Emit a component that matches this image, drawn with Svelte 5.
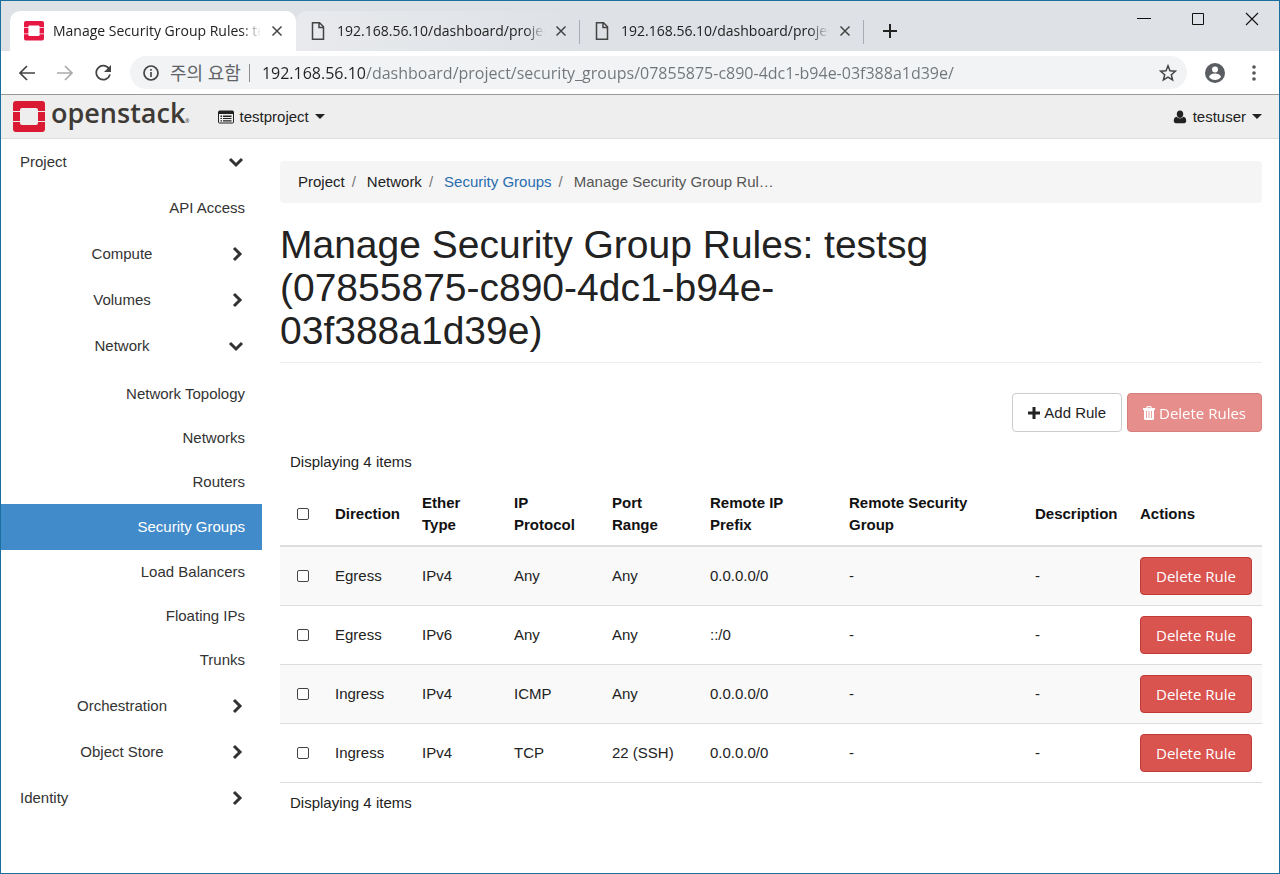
<script lang="ts">
    type Rule = {
        direction: string;
        ether: string;
        protocol: string;
        port: string;
        prefix: string;
    };

    const tabs = [
        { title: "Manage Security Group Rules: testsg", active: true },
        { title: "192.168.56.10/dashboard/project/", active: false },
        { title: "192.168.56.10/dashboard/project/", active: false },
    ];

    const networkItems = [
        "Network Topology",
        "Networks",
        "Routers",
        "Security Groups",
        "Load Balancers",
        "Floating IPs",
        "Trunks",
    ];

    const columns = [
        { label: "Direction", width: 87 },
        { label: "Ether Type", width: 92 },
        { label: "IP Protocol", width: 98 },
        { label: "Port Range", width: 98 },
        { label: "Remote IP Prefix", width: 139 },
        { label: "Remote Security Group", width: 186 },
        { label: "Description", width: 105 },
        { label: "Actions", width: 131 },
    ];

    const rules: Rule[] = [
        { direction: "Egress", ether: "IPv4", protocol: "Any", port: "Any", prefix: "0.0.0.0/0" },
        { direction: "Egress", ether: "IPv6", protocol: "Any", port: "Any", prefix: "::/0" },
        { direction: "Ingress", ether: "IPv4", protocol: "ICMP", port: "Any", prefix: "0.0.0.0/0" },
        { direction: "Ingress", ether: "IPv4", protocol: "TCP", port: "22 (SSH)", prefix: "0.0.0.0/0" },
    ];

    let selected = $state(rules.map(() => false));
    const allSelected = $derived(selected.every(Boolean));
    const noneSelected = $derived(!selected.some(Boolean));

    let url = $state("192.168.56.10/dashboard/project/security_groups/07855875-c890-4dc1-b94e-03f388a1d39e/");

    const toggleAll = () => {
        const next = !allSelected;
        selected = rules.map(() => next);
    };
</script>

{#snippet mark(size: number, color: string)}
    <svg width={size} height={size} viewBox="0 0 32 32" aria-hidden="true">
        <path fill={color} d="M3 0h26a3 3 0 0 1 3 3v7h-7V9a2 2 0 0 0-2-2H9a2 2 0 0 0-2 2v1H0V3a3 3 0 0 1 3-3z" />
        <path fill={color} d="M0 11h7v9H0zM25 11h7v9h-7z" />
        <path fill={color} d="M0 21h7v1a2 2 0 0 0 2 2h14a2 2 0 0 0 2-2v-1h7v7a3 3 0 0 1-3 3H3a3 3 0 0 1-3-3z" />
    </svg>
{/snippet}

{#snippet chevron(open: boolean)}
    <svg class="chevron" width="16" height="16" viewBox="0 0 16 16" aria-hidden="true">
        <path d={open ? "M2 5l6 6 6-6" : "M6 2l6 6-6 6"} />
    </svg>
{/snippet}

{#snippet group(label: string, open: boolean)}
    <button class="group" aria-expanded={open}>
        <span>{label}</span>
        {@render chevron(open)}
    </button>
{/snippet}

<div class="window">
    <div class="tab-strip">
        {#each tabs as tab, i}
            <div class="tab" class:active={tab.active} class:hovered={i === 1}>
                {#if tab.active}
                    {@render mark(20, "#e61742")}
                {:else}
                    <svg width="20" height="20" viewBox="0 0 20 20" aria-hidden="true">
                        <path class="thin" d="M4.5 1.8h7l4 4v12.4h-11zM11 2v4.5h4.5" />
                    </svg>
                {/if}
                <span class="tab-title">{tab.title}</span>
                <button class="tab-close" aria-label="Close tab">
                    <svg width="12" height="12" viewBox="0 0 12 12"><path class="thin" d="M1.5 1.5l9 9m0-9l-9 9" /></svg>
                </button>
            </div>
        {/each}
        <button class="new-tab" aria-label="New tab">
            <svg width="16" height="16" viewBox="0 0 16 16"><path d="M8 1v14M1 8h14" stroke="#222" stroke-width="2" /></svg>
        </button>
        <div class="controls">
            <button aria-label="Minimize">
                <svg width="14" height="14" viewBox="0 0 14 14"><path d="M0 6.5h14" stroke="#111" /></svg>
            </button>
            <button aria-label="Maximize">
                <svg width="14" height="14" viewBox="0 0 14 14"><path d="M1.5 1.5h11v11h-11z" fill="none" stroke="#111" /></svg>
            </button>
            <button aria-label="Close">
                <svg width="14" height="14" viewBox="0 0 14 14"><path d="M1 1l12 12M13 1L1 13" stroke="#111" stroke-width="1.1" /></svg>
            </button>
        </div>
    </div>

    <div class="toolbar">
        <button aria-label="Back">
            <svg width="18" height="18" viewBox="0 0 18 18"><path class="stroke" d="M17 9H2m7-7L2 9l7 7" /></svg>
        </button>
        <button class="dim" aria-label="Forward">
            <svg width="18" height="18" viewBox="0 0 18 18"><path class="stroke" d="M1 9h15M9 2l7 7-7 7" /></svg>
        </button>
        <button aria-label="Reload">
            <svg width="18" height="18" viewBox="0 0 18 18">
                <path class="stroke" d="M15.2 5A7 7 0 1 0 16 10.5" />
                <path d="M17 1v7h-7z" fill="#444" />
            </svg>
        </button>
        <div class="omnibox">
            <svg width="18" height="18" viewBox="0 0 18 18" aria-hidden="true">
                <circle class="thick" cx="9" cy="9" r="7" />
                <path d="M8.1 8h1.8v5H8.100zM8.100 5h1.800v1.800H8.100z" fill="#555" />
            </svg>
            <span class="warning">주의 요함</span>
            <span class="divider"></span>
            <input class="url" aria-label="Address" bind:value={url} />
            <button aria-label="Bookmark this page">
                <svg width="18" height="18" viewBox="0 0 18 18">
                    <path class="thin" d="M9 1.8l2 5 5.4.4-4.1 3.5 1.3 5.3L9 13.1 4.400 16l1.300-5.300L1.600 7.200 7 6.800z" />
                </svg>
            </button>
        </div>
        <button class="profile" aria-label="Profile">
            <svg width="20" height="20" viewBox="0 0 20 20">
                <circle cx="10" cy="10" r="10" fill="#5a5d61" />
                <circle cx="10" cy="6.5" r="3" fill="#fff" />
                <path d="M4 14c1-3 4-3.5 6-3.5s5 .5 6 3.5c-1.5 2-3.5 3-6 3s-4.5-1-6-3z" fill="#fff" />
            </svg>
        </button>
        <button aria-label="Menu">
            <svg width="18" height="18" viewBox="0 0 18 18" fill="#555">
                <circle cx="9" cy="3" r="1.8" /><circle cx="9" cy="9" r="1.8" /><circle cx="9" cy="15" r="1.8" />
            </svg>
        </button>
    </div>

    <header class="navbar">
        <a class="brand" href="#home">
            {@render mark(32, "#da1a32")}
            <span class="wordmark">openstack<small>®</small></span>
        </a>
        <button class="menu">
            <svg width="16" height="14" viewBox="0 0 16 14" aria-hidden="true">
                <path fill="none" stroke="#222" d="M1.5 1h13a1 1 0 0 1 1 1v10a1 1 0 0 1-1 1h-13a1 1 0 0 1-1-1V2a1 1 0 0 1 1-1z" />
                <path fill="#222" d="M1 1h14v3H1zM2.5 5.5H4V7H2.5zM5 5.5h8.5V7H5zM2.5 8H4v1H2.5zM5 8h8.5v1H5zM2.5 10.3H4v1.2H2.5zM5 10.3h8.5v1.2H5z" />
            </svg>
            testproject
            <span class="caret"></span>
        </button>
        <button class="menu user">
            <svg width="14" height="14" viewBox="0 0 14 14" fill="#222" aria-hidden="true">
                <path d="M3.8 4.2a3.2 3.7 0 0 1 6.4 0c0 2.3-1.4 3.8-3.2 3.8S3.8 6.5 3.8 4.2z" />
                <path d="M3.6 6.8C5.5 9 8.5 9 10.4 6.8c2 .4 2.8 1.8 2.8 4.2 0 1.4-.9 2.2-2 2.2H2.8c-1.1 0-2-.8-2-2.2 0-2.4.8-3.8 2.8-4.2z" />
            </svg>
            testuser
            <span class="caret"></span>
        </button>
    </header>

    <div class="body">
        <nav class="sidebar">
            <button class="group root" aria-expanded="true">
                <span>Project</span>
                {@render chevron(true)}
            </button>
            <ul class="single">
                <li><a href="#api">API Access</a></li>
            </ul>
            {@render group("Compute", false)}
            {@render group("Volumes", false)}
            {@render group("Network", true)}
            <ul>
                {#each networkItems as item}
                    <li><a href="#network" class:current={item === "Security Groups"}>{item}</a></li>
                {/each}
            </ul>
            {@render group("Orchestration", false)}
            {@render group("Object Store", false)}
            <button class="group root" aria-expanded="false">
                <span>Identity</span>
                {@render chevron(false)}
            </button>
        </nav>

        <main>
            <ol class="breadcrumb">
                <li>Project</li>
                <li>Network</li>
                <li><a href="#groups">Security Groups</a></li>
                <li class="here">Manage Security Group Rul…</li>
            </ol>

            <div class="page-header">
                <h1>Manage Security Group Rules: testsg (07855875-c890-4dc1-b94e-03f388a1d39e)</h1>
            </div>

            <div class="actions">
                <button class="btn">
                    <svg width="12" height="12" viewBox="0 0 12 12" aria-hidden="true"><path d="M6 0v12M0 6h12" stroke="#222" stroke-width="3" /></svg>
                    Add Rule
                </button>
                <button class="btn danger" disabled={noneSelected}>
                    <svg width="12" height="14" viewBox="0 0 12 14" aria-hidden="true">
                        <path fill="#fff" fill-rule="evenodd" d="M4 0h4l1 2h3v2h-1v8.5a1.5 1.5 0 0 1-1.5 1.5h-7A1.5 1.5 0 0 1 1 12.5V4H0V2h3zM4.5 1.2L4.1 2h3.800l-.4-.8zM3 5v7h.8V5zm2.600 0v7h.8V5zm2.600 0v7H9V5z" />
                    </svg>
                    Delete Rules
                </button>
            </div>

            <p class="count">Displaying 4 items</p>
            <table>
                <colgroup>
                    <col style:width="46px" />
                    {#each columns as column}
                        <col style:width="{column.width}px" />
                    {/each}
                </colgroup>
                <thead>
                    <tr>
                        <th class="check">
                            <input type="checkbox" aria-label="Select all" checked={allSelected} onchange={toggleAll} />
                        </th>
                        {#each columns as column}
                            <th>{column.label}</th>
                        {/each}
                    </tr>
                </thead>
                <tbody>
                    {#each rules as rule, i}
                        <tr>
                            <td class="check">
                                <input type="checkbox" aria-label="Select rule {i + 1}" bind:checked={selected[i]} />
                            </td>
                            <td>{rule.direction}</td>
                            <td>{rule.ether}</td>
                            <td>{rule.protocol}</td>
                            <td>{rule.port}</td>
                            <td>{rule.prefix}</td>
                            <td>-</td>
                            <td>-</td>
                            <td><button class="btn danger">Delete Rule</button></td>
                        </tr>
                    {/each}
                </tbody>
            </table>
            <p class="count">Displaying 4 items</p>
        </main>
    </div>
</div>

<style>
    :global(body) {
        margin: 0;
    }

    .window {
        --sans: "Liberation Sans", Arial, sans-serif;
        --ui: "Open Sans", "Noto Sans CJK KR", sans-serif;
        box-sizing: border-box;
        min-height: 100vh;
        border: 1px solid #1a6f9f;
        background: #fff;
        color: #222;
        font: 15px/22px var(--sans);
    }

    .window * {
        box-sizing: border-box;
    }

    button {
        display: flex;
        align-items: center;
        justify-content: center;
        padding: 0;
        border: 0;
        background: none;
        color: inherit;
        font: inherit;
        cursor: pointer;
    }

    a {
        color: inherit;
        text-decoration: none;
    }

    svg {
        display: block;
        flex: none;
    }

    ul,
    ol {
        margin: 0;
        padding: 0;
        list-style: none;
    }

    .thin {
        fill: none;
        stroke: #444;
        stroke-width: 1.5;
    }

    .stroke,
    .thick {
        fill: none;
        stroke: #444;
        stroke-width: 1.7;
    }

    /* browser chrome */
    .tab-strip {
        display: flex;
        height: 50px;
        padding: 10px 0 0 9px;
        background: #dee1e6;
    }

    .tab {
        position: relative;
        display: flex;
        align-items: center;
        width: 284px;
        padding: 0 12px;
        border-radius: 10px 10px 0 0;
        font: 14px/20px var(--ui);
    }

    .tab.active {
        width: 286px;
        padding-left: 14px;
        background: #fff;
    }

    .tab.hovered {
        background: linear-gradient(90deg, #e8eaed, #dee1e6);
    }

    .tab:not(.active)::after {
        content: "";
        position: absolute;
        top: 9px;
        right: 0;
        width: 1px;
        height: 24px;
        background: #a9adb3;
    }

    .tab-title {
        flex: 1;
        margin: 0 9px;
        overflow: hidden;
        white-space: nowrap;
        mask-image: linear-gradient(90deg, #000 calc(100% - 20px), transparent);
    }

    .tab-close {
        width: 14px;
        height: 20px;
    }

    .new-tab {
        width: 52px;
    }

    .controls {
        display: flex;
        align-self: flex-start;
        margin-left: auto;
    }

    .controls button {
        width: 54px;
        height: 16px;
    }

    .toolbar {
        display: flex;
        align-items: center;
        gap: 20px;
        height: 44px;
        padding: 0 16px 0 17px;
        border-bottom: 1px solid #999;
    }

    .dim {
        opacity: 0.45;
    }

    .omnibox {
        flex: 1;
        display: flex;
        align-items: center;
        height: 33px;
        margin: 0 -2px;
        padding: 0 10px 0 12px;
        border-radius: 17px;
        background: #f1f3f4;
        color: #5f6368;
        font: 16px/22px var(--ui);
    }

    .warning {
        margin-left: 10px;
        font-size: 18px;
    }

    .divider {
        width: 1px;
        height: 18px;
        margin: 0 12px 0 8px;
        background: #8a8d91;
    }

    /* the host part is darker than the path */
    .url {
        flex: 1;
        min-width: 0;
        padding: 0;
        border: 0;
        outline: 0;
        background: linear-gradient(90deg, #222 103px, #70757a 103px);
        background-clip: text;
        color: transparent;
        font: inherit;
    }

    .navbar {
        display: flex;
        align-items: center;
        height: 44px;
        padding: 0 17px 0 12px;
        border-bottom: 1px solid #ddd;
        background: #eee;
    }

    .brand {
        display: flex;
        align-items: center;
        gap: 6px;
        margin-right: 28px;
    }

    .wordmark {
        color: #3e3a36;
        font: 600 27px/32px var(--ui);
    }

    .wordmark small {
        font-size: 5px;
    }

    .menu {
        gap: 6px;
    }

    .user {
        margin-left: auto;
    }

    .caret {
        border: 5px solid transparent;
        border-top-color: #222;
        border-bottom: 0;
    }

    /* dashboard */
    .body {
        display: flex;
        gap: 18px;
    }

    .sidebar {
        flex: none;
        width: 261px;
        color: #333;
    }

    .group {
        width: 100%;
        height: 46px;
        padding: 0 18px 0 19px;
    }

    .group span {
        flex: 1;
        padding-right: 4px;
    }

    .root span {
        text-align: left;
    }

    .chevron {
        fill: none;
        stroke: #333;
        stroke-width: 3;
    }

    .sidebar ul {
        padding: 3px 0 1px;
    }

    .sidebar .single {
        padding: 1px 0;
    }

    .sidebar a {
        display: block;
        padding: 11px 17px;
        text-align: right;
    }

    .sidebar .current {
        padding: 12px 17px;
        background: #428bca;
        color: #fff;
    }

    main {
        flex: 1;
        min-width: 0;
        padding: 22px 17px 0 0;
    }

    .breadcrumb {
        display: flex;
        padding: 10px 18px;
        border-radius: 4px;
        background: #f5f5f5;
    }

    .breadcrumb li + li::before {
        content: "/";
        padding: 0 11px 0 7px;
        color: #777;
    }

    .breadcrumb a {
        color: #2a6db0;
    }

    .breadcrumb .here {
        color: #555;
    }

    .page-header {
        margin-top: 20px;
        padding-bottom: 10px;
        border-bottom: 1px solid #eee;
    }

    h1 {
        width: 75%;
        margin: 0;
        font-size: 39px;
        font-weight: 400;
        line-height: 43px;
    }

    .actions {
        display: flex;
        justify-content: flex-end;
        gap: 5px;
        margin: 30px 0 19px;
    }

    .btn {
        gap: 4px;
        height: 39px;
        padding: 0 15px;
        border: 1px solid #ccc;
        border-radius: 4px;
        background: #fff;
        white-space: nowrap;
    }

    .danger {
        border-color: #c03a36;
        background: #d9534f;
        color: #fff;
        font-family: var(--ui);
    }

    .danger:disabled {
        opacity: 0.65;
    }

    .count {
        margin: 0;
        padding: 0 10px;
    }

    table {
        width: 100%;
        margin: 10px 0 9px;
        border-spacing: 0;
        table-layout: fixed;
    }

    th,
    td {
        padding: 10px 9px;
        border-bottom: 1px solid #ddd;
        text-align: left;
        vertical-align: middle;
    }

    th {
        padding: 9px 20px 9px 9px;
        border-bottom-width: 2px;
        color: #111;
    }

    tbody tr:nth-child(odd) {
        background: #f9f9f9;
    }

    td .btn {
        width: 112px;
        height: 38px;
    }

    .check {
        padding-left: 17px;
    }

    input[type="checkbox"] {
        display: block;
        appearance: none;
        width: 12px;
        height: 12px;
        margin: 0;
        border: 1px solid #444;
        border-radius: 2px;
        background: #fff;
    }

    input[type="checkbox"]:checked {
        background: #428bca;
    }
</style>
